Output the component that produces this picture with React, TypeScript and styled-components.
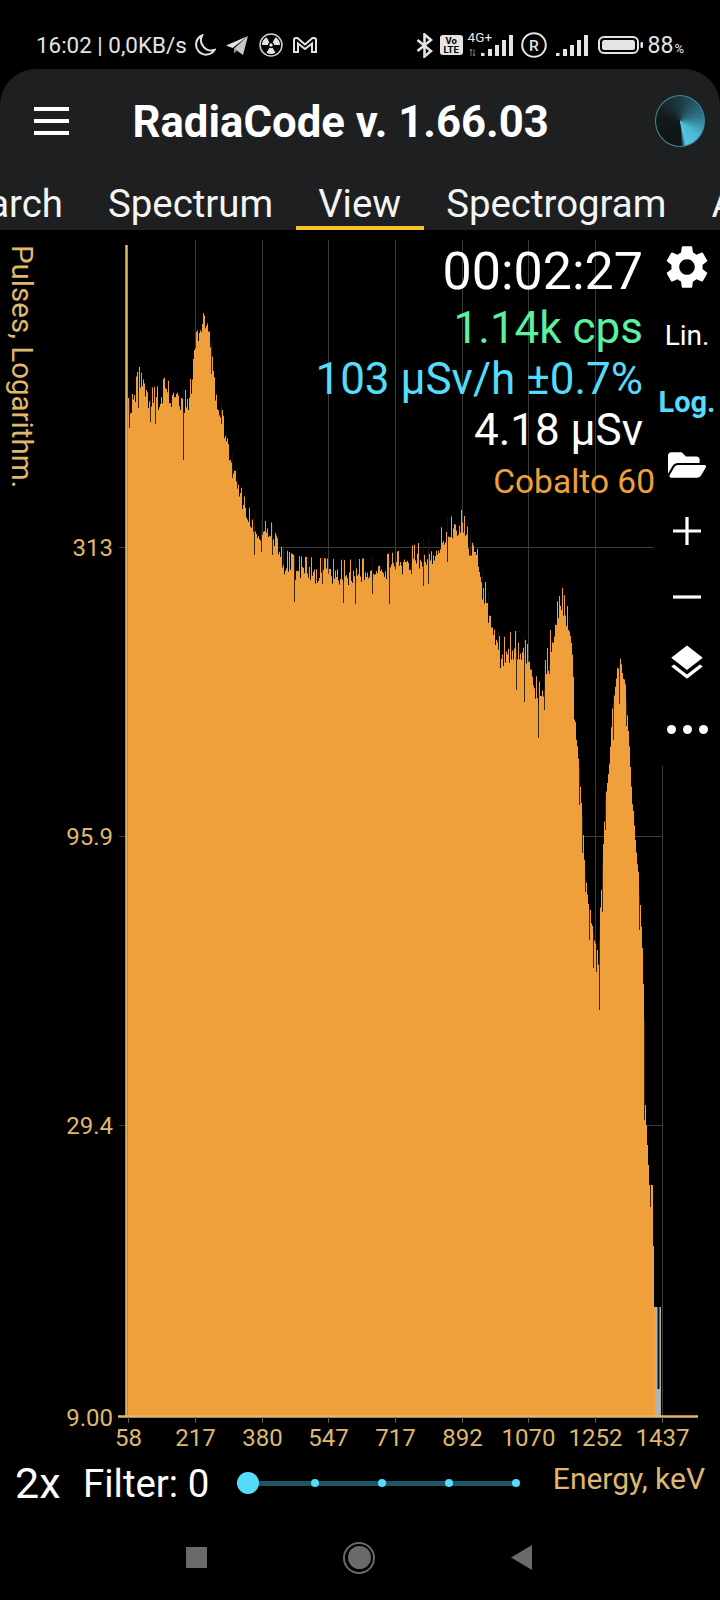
import styled, { createGlobalStyle } from "styled-components";
import { FaFolderOpen } from "react-icons/fa";
import { MdLayers, MdSettings } from "react-icons/md";

const GlobalStyle = createGlobalStyle`
  html, body {
    margin: 0;
    padding: 0;
    background: #000;
  }
  body {
    font-family: Roboto, "Liberation Sans", sans-serif;
  }
`;

const AXIS = "#dfb76e";
const ORANGE = "#f0a03a";
const CYAN = "#55dcfb";

const Page = styled.div`
  width: 720px;
  height: 1600px;
  background: #000;
  display: flex;
  flex-direction: column;
  overflow: hidden;
`;

/* status bar */
const StatusBar = styled.div`
  height: 69px;
  flex: none;
  padding: 21px 36px 0;
  box-sizing: border-box;
  display: flex;
  align-items: center;
  justify-content: space-between;
  color: #e4e4e4;
`;

const StatusGroup = styled.div`
  display: flex;
  align-items: center;
`;

const Clock = styled.span`
  font-size: 22.4px;
  white-space: nowrap;
`;

const Slot = styled.span<{ $gap: number }>`
  margin-left: ${(p) => p.$gap}px;
  display: flex;
  align-items: center;
  position: relative;
`;

const VoLte = styled.span`
  width: 23px;
  height: 20px;
  border-radius: 3px;
  background: #e4e4e4;
  color: #000;
  font-size: 9.5px;
  font-weight: 700;
  line-height: 9px;
  text-align: center;
  display: flex;
  flex-direction: column;
  justify-content: center;
`;

const NetStack = styled.span`
  width: 45px;
  height: 24px;
  display: block;
`;

const NetLabel = styled.span`
  position: absolute;
  left: 0;
  top: -3px;
  font-size: 13.5px;
  line-height: 14px;
`;

const Percent = styled.span`
  font-size: 23px;
  display: flex;
  align-items: baseline;
  small {
    font-size: 13px;
    margin-left: 1px;
  }
`;

/* app bar */
const AppBar = styled.header`
  height: 161px;
  flex: none;
  background: #1e1f20;
  border-radius: 36px 36px 0 0;
  display: flex;
  flex-direction: column;
  overflow: hidden;
`;

const TitleRow = styled.div`
  height: 104px;
  flex: none;
  padding: 0 15px 0 34px;
  display: flex;
  align-items: center;
`;

const Burger = styled.div`
  width: 35px;
  display: flex;
  flex-direction: column;
  gap: 8.5px;
  span {
    height: 3.5px;
    background: #fff;
  }
`;

const Title = styled.h1`
  margin: 2px 0 0 63.5px;
  font-size: 43.7px;
  font-weight: 700;
  color: #fff;
  white-space: nowrap;
  flex: 1;
`;

const Dial = styled.div`
  width: 50px;
  height: 52px;
  border-radius: 50%;
  border: 1.5px solid #3d8a9c;
  box-sizing: border-box;
  background: conic-gradient(
    from 167deg,
    #4ab9d4 0deg,
    #101416 10deg,
    #14191c 120deg,
    #1e3e49 200deg,
    #2f7587 270deg,
    #49b8d3 320deg,
    #55c6e0 360deg
  );
`;

const Tabs = styled.nav`
  height: 57px;
  display: flex;
  margin-left: -77.5px;
  width: 830px;
`;

const Tab = styled.div<{ $active?: boolean }>`
  padding: 0 22.5px;
  height: 57px;
  box-sizing: border-box;
  font-size: 38.4px;
  line-height: 62px;
  color: #f4f4f4;
  white-space: nowrap;
  border-bottom: 4px solid ${(p) => (p.$active ? "#f5c32c" : "transparent")};
`;

/* chart */
const ChartArea = styled.main`
  position: relative;
  height: 1220px;
  flex: none;
`;

const ChartSvg = styled.svg`
  display: block;
  width: 720px;
  height: 1220px;
  font-family: Roboto, "Liberation Sans", sans-serif;
`;

const Trace = styled.g`
  filter: blur(0.45px);
`;

const Readout = styled.div`
  position: absolute;
  top: 13px;
  right: 77px;
  display: flex;
  flex-direction: column;
  align-items: flex-end;
`;

const Time = styled.div`
  font-size: 52px;
  line-height: 58px;
  color: #fff;
`;

const Reading = styled.div<{ $color: string; $first?: boolean }>`
  font-size: 44px;
  line-height: 51px;
  margin-top: ${(p) => (p.$first ? 2 : 0)}px;
  color: ${(p) => p.$color};
  white-space: nowrap;
`;

const Isotope = styled.div`
  font-size: 33.5px;
  line-height: 51px;
  color: ${ORANGE};
  margin-right: -12px;
`;

const Toolbar = styled.aside`
  position: absolute;
  top: 0;
  right: 0;
  width: 66px;
  height: 536px;
  padding-top: 4px;
  box-sizing: border-box;
  background: #000;
  display: grid;
  grid-auto-rows: 66px;
  justify-items: center;
  align-items: center;
  color: #fff;
`;

const ScaleButton = styled.div<{ $active?: boolean }>`
  font-size: ${(p) => (p.$active ? 29 : 28)}px;
  font-weight: ${(p) => (p.$active ? 700 : 400)};
  color: ${(p) => (p.$active ? CYAN : "#fff")};
  position: relative;
  top: ${(p) => (p.$active ? 3 : 2)}px;
`;

const Dots = styled.div`
  display: flex;
  gap: 7px;
  span {
    width: 9px;
    height: 9px;
    border-radius: 50%;
    background: #fff;
  }
`;

/* footer */
const Footer = styled.div`
  height: 66px;
  flex: none;
  padding: 0 15px;
  display: flex;
  align-items: center;
  color: #fff;
`;

const Zoom = styled.div`
  font-size: 43px;
  width: 68px;
`;

const FilterLabel = styled.div`
  font-size: 38.4px;
  width: 164.5px;
  white-space: nowrap;
`;

const Track = styled.div`
  width: 268.5px;
  height: 5px;
  background: #1f5663;
  display: flex;
  justify-content: space-between;
  align-items: center;
`;

const Stop = styled.div`
  width: 0;
  display: flex;
  justify-content: center;
`;

const Knob = styled.div<{ $active?: boolean }>`
  flex: none;
  width: ${(p) => (p.$active ? 22 : 8)}px;
  height: ${(p) => (p.$active ? 22 : 8)}px;
  border-radius: 50%;
  background: ${CYAN};
`;

const EnergyLabel = styled.div`
  margin-left: auto;
  font-size: 30px;
  color: ${AXIS};
  position: relative;
  top: -5px;
`;

/* android nav */
const NavBar = styled.div`
  flex: 1;
  padding: 0 0 0 186px;
  display: flex;
  align-items: center;
  gap: 136px;
  padding-bottom: 1px;
`;

const NavSquare = styled.div`
  width: 21px;
  height: 21px;
  background: #6a6a6a;
`;

const NavRing = styled.div`
  width: 32px;
  height: 32px;
  border-radius: 50%;
  border: 2.5px solid #6a6a6a;
  box-sizing: border-box;
  display: flex;
  align-items: center;
  justify-content: center;
  &::after {
    content: "";
    width: 23px;
    height: 23px;
    border-radius: 50%;
    background: #6a6a6a;
  }
`;

const NavBack = styled.div`
  width: 21px;
  height: 25px;
  background: #6a6a6a;
  clip-path: polygon(100% 0, 100% 100%, 0 50%);
`;

// top edge of the spectrum, page coordinates
const ENVELOPE: [number, number][] = [
  [128, 398], [132, 394], [137, 372], [141, 362], [146, 380], [150, 388], [158, 386], [165, 376], [170, 384],
  [175, 382], [182, 390], [188, 390], [192, 368], [196, 332], [200, 326], [203, 313], [208, 326], [212, 348],
  [215, 392], [222, 410], [228, 444], [235, 462], [242, 492], [250, 510], [260, 522], [270, 520], [280, 546],
  [295, 556], [320, 558], [345, 560], [370, 558], [395, 552], [402, 550], [420, 542], [435, 538], [445, 520],
  [455, 514], [462, 509], [468, 530], [476, 532], [480, 562], [487, 590], [493, 612], [500, 640], [510, 632],
  [520, 630], [530, 650], [538, 685], [545, 660], [550, 630], [556, 604], [562, 588], [567, 606], [572, 636],
  [575, 722], [579, 760], [582, 812], [585, 870], [590, 910], [595, 940], [598, 955], [602, 860], [605, 795],
  [609, 760], [612, 704], [616, 672], [620, 655], [625, 680], [628, 722], [631, 782], [635, 840], [638, 866],
  [640, 905], [642, 948], [644, 1020], [645, 1105], [649, 1185], [652, 1185], [654, 1307], [655, 1307],
];

const SPIKES: [number, number][] = [
  [129, 428], [138, 408], [150, 422], [155, 424], [183, 460], [211, 374], [221, 424], [226, 438], [232, 478], [237, 487],
  [254, 555], [261, 552], [272, 555], [283, 565], [294, 602], [308, 578], [322, 584], [343, 603], [355, 604], [372, 594],
  [389, 604], [411, 574], [423, 586], [428, 584], [447, 562], [470, 555], [482, 590], [488, 610], [498, 650], [516, 690],
  [524, 702], [538, 738], [544, 710], [549, 674], [569, 630], [579, 805], [582, 853], [585, 892], [589, 940], [593, 968],
  [596, 972], [599, 1010], [602, 912], [605, 830], [613, 740], [619, 704], [626, 726], [634, 810], [639, 930], [644, 1120],
  [650, 1207],
];

function envelopeAt(x: number) {
  for (let i = 1; i < ENVELOPE.length; i++) {
    const [x0, y0] = ENVELOPE[i - 1];
    const [x1, y1] = ENVELOPE[i];
    if (x <= x1) return y0 + ((y1 - y0) * (x - x0)) / (x1 - x0);
  }
  return 1307;
}

function noiseAmp(x: number) {
  if (x < 192) return 24;
  if (x < 215) return 12;
  if (x < 280) return 20;
  if (x < 480) return 26;
  if (x < 575) return 30;
  return x < 640 ? 10 : 0;
}

function spectrumPath() {
  let seed = 1437;
  const next = () => {
    seed = (seed * 16807) % 2147483647;
    return seed / 2147483647;
  };
  let d = "M128 1416";
  for (let x = 128; x < 655; x++) {
    const r = next();
    const tip = next() < 0.16;
    const top = envelopeAt(x) + (tip ? 0 : noiseAmp(x) * (0.35 + 0.65 * r));
    d += `V${top.toFixed(1)}H${x + 1}`;
  }
  return d + "V1416Z";
}

const TICKS = [
  ["58", 128], ["217", 195], ["380", 262], ["547", 328], ["717", 395],
  ["892", 462], ["1070", 528], ["1252", 595], ["1437", 662],
] as const;

const LEVELS = [["313", 547], ["95.9", 836], ["29.4", 1125], ["9.00", 1417]] as const;

function Spectrum() {
  return (
    <ChartSvg viewBox="0 230 720 1220">
      {TICKS.slice(1).map(([, x]) => (
        <line key={x} x1={x + 0.5} x2={x + 0.5} y1={240} y2={1417} stroke="#3b3b3b" />
      ))}
      {LEVELS.slice(0, 3).map(([, y]) => (
        <line key={y} x1={119} x2={662} y1={y + 0.5} y2={y + 0.5} stroke="#3b3b3b" />
      ))}
      <Trace>
        <path d={spectrumPath()} fill={ORANGE} />
        {SPIKES.map(([x, y]) => (
          <line key={x} x1={x + 0.5} x2={x + 0.5} y1={envelopeAt(x) - 2} y2={y} stroke="#1c1206" strokeOpacity={0.85} />
        ))}
        <rect x={655} y={1307} width={6} height={109} fill="#b2b2b2" />
        <rect x={657.5} y={1307} width={2} height={82} fill="#111" />
      </Trace>
      <line x1={126.5} x2={126.5} y1={245} y2={1417} stroke={AXIS} strokeWidth={2.5} />
      <line x1={118} x2={698} y1={1416.5} y2={1416.5} stroke={AXIS} strokeWidth={2.5} />
      {TICKS.map(([label, x]) => (
        <g key={label}>
          <line x1={x + 0.5} x2={x + 0.5} y1={1417} y2={1423} stroke="#6f5d3a" />
          <text x={x + 0.5} y={1446} fontSize={24} fill={AXIS} textAnchor="middle">
            {label}
          </text>
        </g>
      ))}
      {LEVELS.map(([label, y]) => (
        <text key={label} x={113} y={y + 8.5} fontSize={24} fill={AXIS} textAnchor="end">
          {label}
        </text>
      ))}
      <text transform="translate(12 245) rotate(90)" fontSize={29.5} fill={AXIS}>
        Pulses, Logarithm.
      </text>
    </ChartSvg>
  );
}

function SignalBars() {
  return (
    <g fill="#e4e4e4">
      <rect x={0} y={18} width={3.5} height={3} />
      <rect x={7} y={14} width={4} height={7} />
      <rect x={14} y={10} width={4} height={11} />
      <rect x={21} y={5} width={4} height={16} />
      <rect x={28} y={0} width={4} height={21} />
    </g>
  );
}

// one blade of the radiation mark, as an arc sector around the middle of the icon
function blade(deg: number) {
  const pt = (r: number, a: number) => {
    const rad = (a * Math.PI) / 180;
    return `${(12 + r * Math.cos(rad)).toFixed(2)} ${(12 + r * Math.sin(rad)).toFixed(2)}`;
  };
  return `M${pt(3.2, deg - 30)}L${pt(9, deg - 30)}A9 9 0 0 1 ${pt(9, deg + 30)}L${pt(3.2, deg + 30)}A3.2 3.2 0 0 0 ${pt(3.2, deg - 30)}Z`;
}

export default function App() {
  return (
    <Page>
      <GlobalStyle />
      <StatusBar>
        <StatusGroup>
          <Clock>16:02 | 0,0KB/s</Clock>
          <Slot $gap={6}>
            <svg width="23" height="22" viewBox="0 0 23 22" fill="none" stroke="#e4e4e4" strokeWidth="2">
              <path d="M9 1.5A10 10 0 1 0 21.5 16 10.5 10.5 0 0 1 9 1.5Z" />
            </svg>
          </Slot>
          <Slot $gap={10}>
            <svg width="22" height="19" viewBox="0 0 22 19">
              <path d="M22 0 0 9.5l6.5 2.5L22 0Z" fill="#e4e4e4" />
              <path d="M22 0 8 12.5 17 19 22 0Z" fill="#c9c9c9" />
              <path d="M8 12.5v5l3-3Z" fill="#9a9a9a" />
            </svg>
          </Slot>
          <Slot $gap={11}>
            <svg width="24" height="24" viewBox="0 0 24 24" fill="#e4e4e4">
              <circle cx="12" cy="12" r="11" fill="none" stroke="#cfcfcf" strokeWidth="1.5" />
              <path d={blade(-150)} />
              <path d={blade(-30)} />
              <path d={blade(90)} />
              <circle cx="12" cy="12" r="1.7" />
            </svg>
          </Slot>
          <Slot $gap={10}>
            <svg width="24" height="16" viewBox="0 0 24 16" fill="none" stroke="#e4e4e4" strokeWidth="2">
              <path d="M3 1h1.5L12 7.5 19.5 1H21a2 2 0 0 1 2 2v12h-4V6.5L12 12 5 6.5V15H1V3a2 2 0 0 1 2-2Z" />
            </svg>
          </Slot>
        </StatusGroup>
        <StatusGroup>
          <svg width="17" height="25" viewBox="0 0 17 25" fill="none" stroke="#e4e4e4" strokeWidth="2.6">
            <path d="M1.5 7 15 18 8.5 23.5V1.5L15 7 1.5 18" />
          </svg>
          <Slot $gap={7}>
            <VoLte>
              <span>Vo</span>
              <span>LTE</span>
            </VoLte>
          </Slot>
          <Slot $gap={5}>
            <NetStack>
              <svg width="45" height="24" viewBox="0 0 45 24">
                <g transform="translate(13 2)">
                  <SignalBars />
                </g>
                <path d="M3 16v7M6 23v-7M2 18l1-2 1 2M5 21l1 2 1-2" stroke="#777" strokeWidth="1" fill="none" />
              </svg>
            </NetStack>
            <NetLabel>4G+</NetLabel>
          </Slot>
          <Slot $gap={8}>
            <svg width="26" height="26" viewBox="0 0 26 26">
              <circle cx="13" cy="13" r="11.8" fill="none" stroke="#e4e4e4" strokeWidth="2" />
              <text x="13" y="18.5" fontSize="15.5" fontWeight="500" textAnchor="middle" fill="#e4e4e4">
                R
              </text>
            </svg>
          </Slot>
          <Slot $gap={9}>
            <svg width="32" height="21" viewBox="0 0 32 21">
              <SignalBars />
            </svg>
          </Slot>
          <Slot $gap={10}>
            <svg width="45" height="18" viewBox="0 0 45 18">
              <rect x="1" y="1" width="39" height="16" rx="5" fill="none" stroke="#e4e4e4" strokeWidth="2" />
              <rect x="4" y="4" width="33" height="10" rx="2.5" fill="#e4e4e4" />
              <rect x="42.5" y="6" width="2.5" height="6" rx="1" fill="#e4e4e4" />
            </svg>
          </Slot>
          <Slot $gap={5}>
            <Percent>
              88<small>%</small>
            </Percent>
          </Slot>
        </StatusGroup>
      </StatusBar>

      <AppBar>
        <TitleRow>
          <Burger>
            <span />
            <span />
            <span />
          </Burger>
          <Title>RadiaCode v. 1.66.03</Title>
          <Dial />
        </TitleRow>
        <Tabs>
          <Tab>Search</Tab>
          <Tab>Spectrum</Tab>
          <Tab $active>View</Tab>
          <Tab>Spectrogram</Tab>
          <Tab>About</Tab>
        </Tabs>
      </AppBar>

      <ChartArea>
        <Spectrum />
        <Readout>
          <Time>00:02:27</Time>
          <Reading $color="#5cf09f" $first>
            1.14k cps
          </Reading>
          <Reading $color={CYAN}>103 µSv/h ±0.7%</Reading>
          <Reading $color="#fff">4.18 µSv</Reading>
          <Isotope>Cobalto 60</Isotope>
        </Readout>
        <Toolbar>
          <MdSettings size={52} />
          <ScaleButton>Lin.</ScaleButton>
          <ScaleButton $active>Log.</ScaleButton>
          <FaFolderOpen size={38} />
          <svg width="30" height="30" viewBox="0 0 30 30" stroke="#fff" strokeWidth="3.2">
            <path d="M15 1v28M1 15h28" />
          </svg>
          <svg width="30" height="4" viewBox="0 0 30 4" stroke="#fff" strokeWidth="3.2">
            <path d="M1 2h28" />
          </svg>
          <MdLayers size={42} />
          <Dots>
            <span />
            <span />
            <span />
          </Dots>
        </Toolbar>
      </ChartArea>

      <Footer>
        <Zoom>2x</Zoom>
        <FilterLabel>Filter: 0</FilterLabel>
        <Track>
          <Stop>
            <Knob $active />
          </Stop>
          <Stop>
            <Knob />
          </Stop>
          <Stop>
            <Knob />
          </Stop>
          <Stop>
            <Knob />
          </Stop>
          <Stop>
            <Knob />
          </Stop>
        </Track>
        <EnergyLabel>Energy, keV</EnergyLabel>
      </Footer>

      <NavBar>
        <NavSquare />
        <NavRing />
        <NavBack />
      </NavBar>
    </Page>
  );
}
